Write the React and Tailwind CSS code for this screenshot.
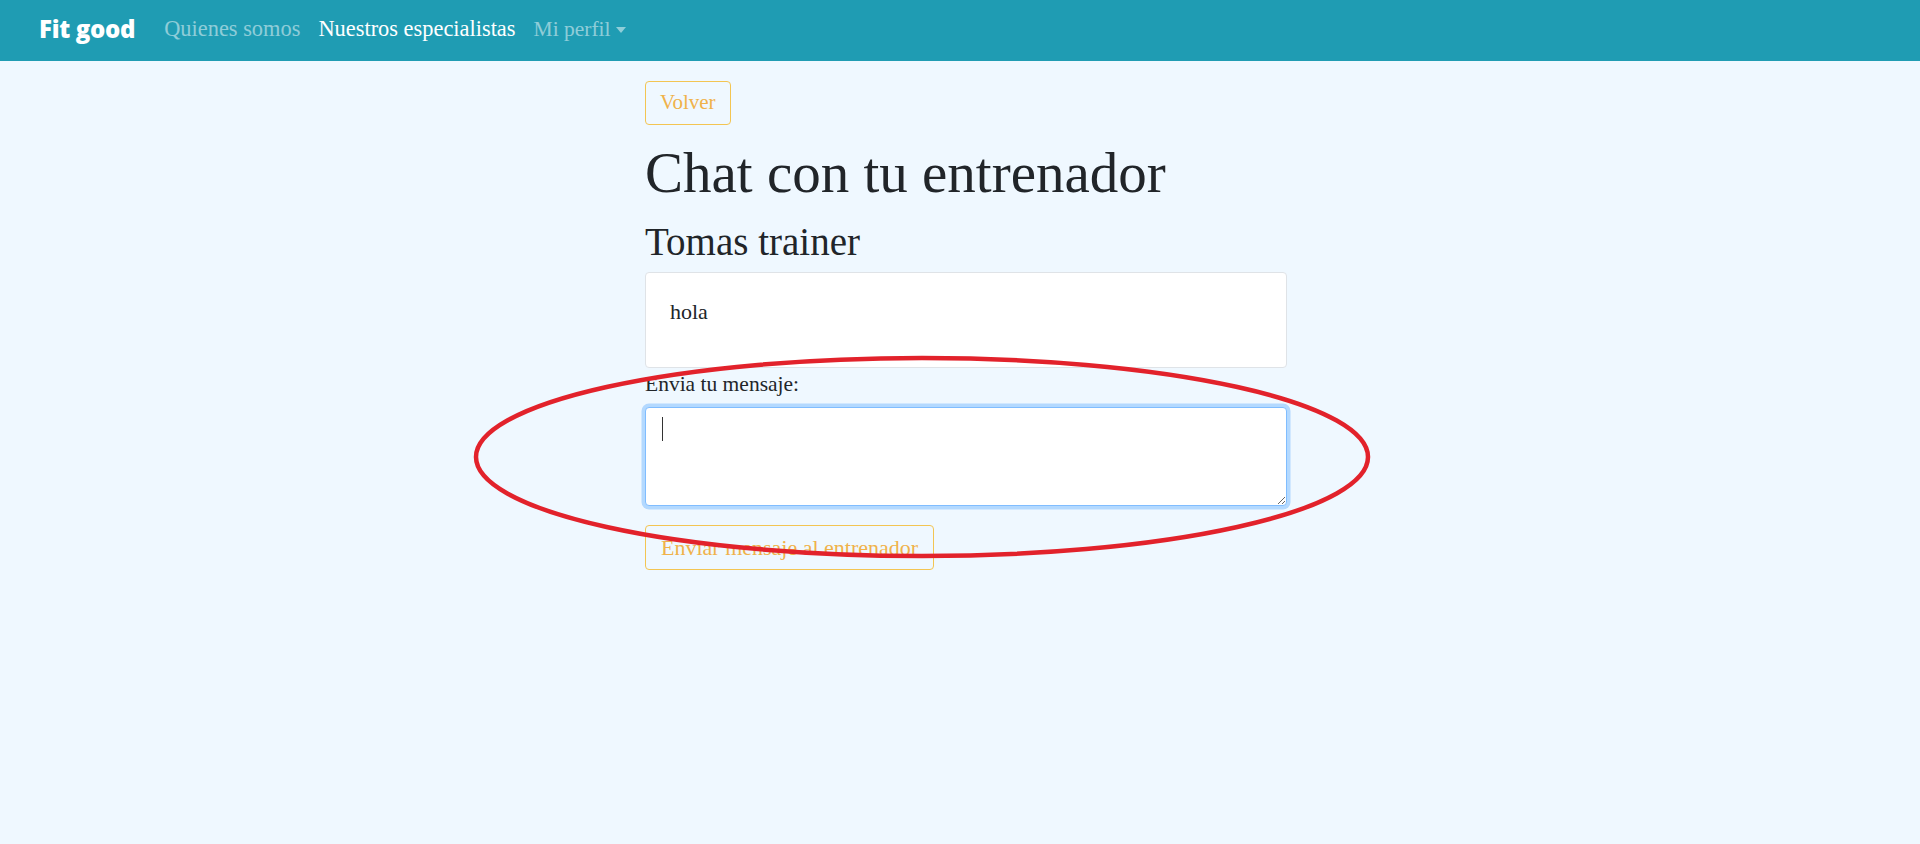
import React from "react";

const serif = { fontFamily: '"Liberation Serif", "Times New Roman", serif' };

const Navbar = () => {
  return (
    <nav className="flex h-[61px] items-center bg-[#1f9cb3] pb-[4px] pl-[39px]">
      <a
        href="#"
        className="text-[24px] font-extrabold tracking-[-0.3px] text-white"
        style={{ fontFamily: '"Open Sans", sans-serif' }}
      >
        Fit good
      </a>
      <ul className="ml-[29px] flex items-center gap-[18px] text-[22.4px] leading-[30px]">
        <li>
          <a href="#" className="text-white/50">
            Quienes somos
          </a>
        </li>
        <li>
          <a href="#" className="text-white">
            Nuestros especialistas
          </a>
        </li>
        <li>
          <a href="#" className="flex items-center text-white/50">
            <span className="text-[21.5px]">Mi perfil</span>
            <span className="ml-[5px] mt-[2px] inline-block h-0 w-0 border-x-[5px] border-t-[6px] border-x-transparent border-t-white/50"></span>
          </a>
        </li>
      </ul>
    </nav>
  );
};

export default function App() {
  return (
    <div className="relative min-h-screen bg-[#eff8ff] text-[#212529]" style={serif}>
      <Navbar />

      <div className="mx-auto w-[654px] pl-[12px] pt-[20px]">
        <button className="h-[44px] rounded-[4px] border border-[#f3c552] px-[14px] text-[21px] text-[#f0b24a]">
          Volver
        </button>

        <h1 className="mt-[16px] text-[57px] font-normal leading-[64px]">
          Chat con tu entrenador
        </h1>
        <h2 className="mt-[15px] text-[39px] font-normal leading-[44px]">
          Tomas trainer
        </h2>

        <div className="mt-[8px] h-[96px] rounded-[4px] border border-[#dfe3e7] bg-white px-[24px] pt-[24px]">
          <p className="text-[22px] leading-[30px]">hola</p>
        </div>

        <label htmlFor="mensaje" className="mt-[1px] block text-[21.5px] leading-[30px]">
          Envia tu mensaje:
        </label>
        <div className="relative mt-[8px]">
          <textarea
            id="mensaje"
            name="mensaje"
            className="block h-[99px] w-full rounded-[4px] border border-[#80bdff] bg-white px-[15px] py-[8px] text-[22px] shadow-[0_0_0_3.5px_rgba(0,123,255,0.25)] outline-none"
          ></textarea>
          <span className="absolute left-[17px] top-[10px] h-[24px] w-[1px] bg-[#333]"></span>
        </div>

        <button className="mt-[19px] h-[45px] rounded-[4px] border border-[#f3c552] px-[15px] text-[22px] text-[#f0b24a]">
          Enviar mensaje al entrenador
        </button>
      </div>

      {/* marca roja dibujada encima */}
      <svg
        className="pointer-events-none absolute left-0 top-0"
        width="1920"
        height="844"
        viewBox="0 0 1920 844"
      >
        <ellipse
          cx="922"
          cy="457"
          rx="446"
          ry="99"
          fill="none"
          stroke="#e2222b"
          strokeWidth="4.5"
        />
      </svg>
    </div>
  );
}
